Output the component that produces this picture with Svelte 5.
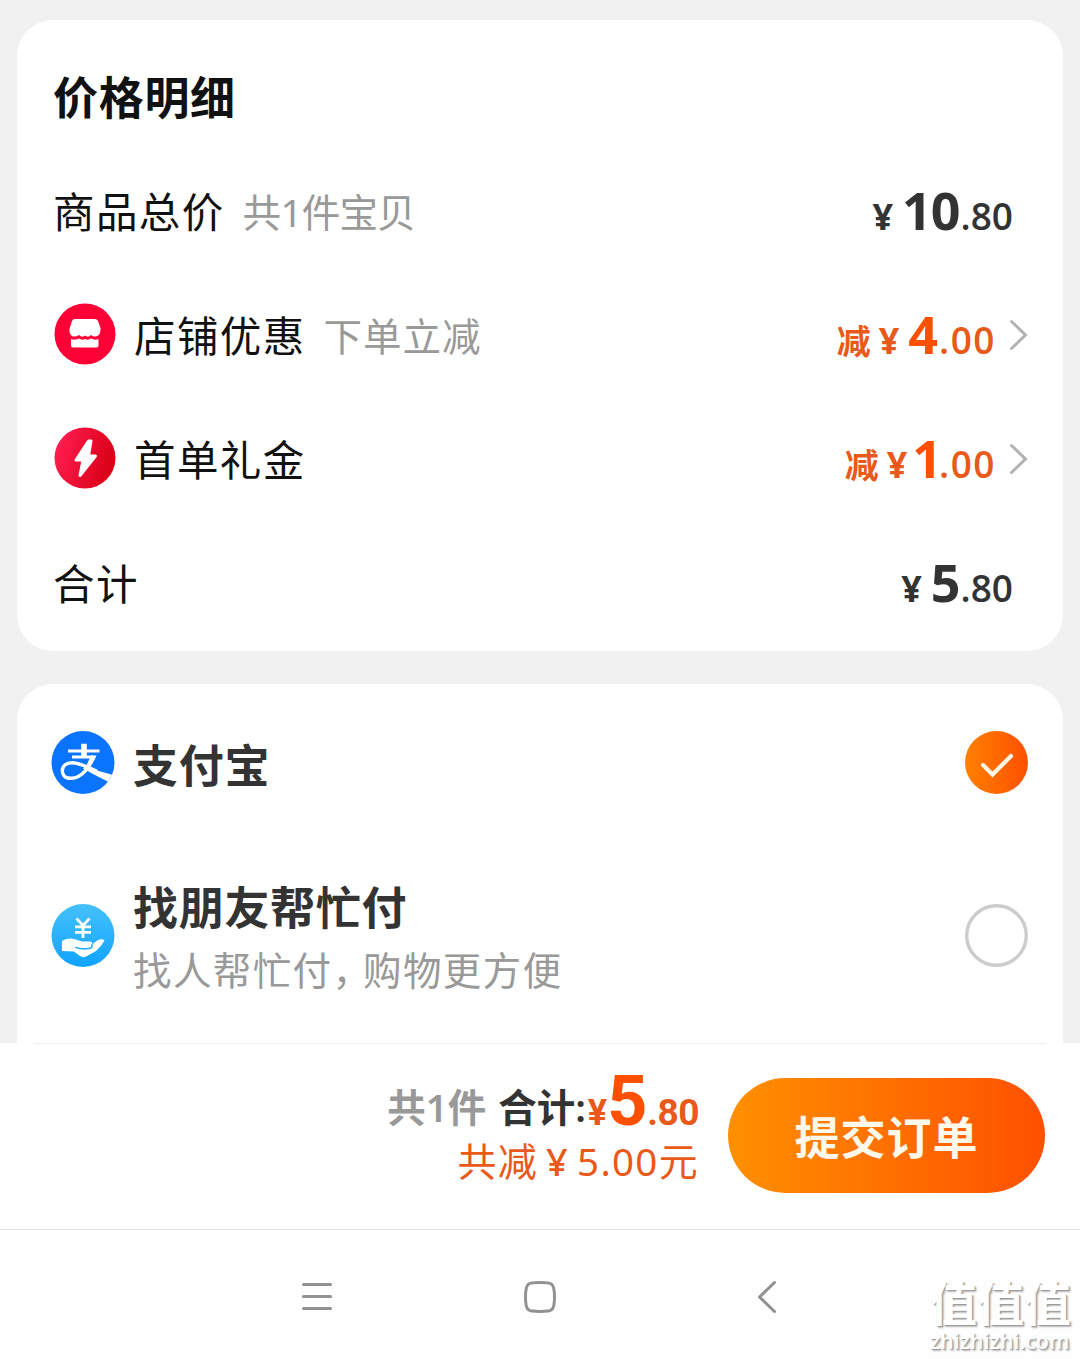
<script>
  const rows = [
    { label: '商品总价', note: '共1件宝贝', int: '10', dec: '.80' },
    { label: '店铺优惠', note: '下单立减', icon: 'shop', cut: true, int: '4', dec: '.00' },
    { label: '首单礼金', icon: 'bolt', cut: true, int: '1', dec: '.00' },
    { label: '合计', int: '5', dec: '.80' },
  ];
  let method = $state('alipay');
</script>

{#snippet radio(on)}
  <svg class="radio" viewBox="0 0 64 64">
    {#if on}
      <circle cx="31.500" cy="31.500" r="31.5" fill="url(#orange)" />
      <path d="M18 34 L27.500 43.500 L46 25" fill="none" stroke="#fff6e6" stroke-width="4.2" stroke-linecap="round" stroke-linejoin="miter" />
    {:else}
      <circle cx="31.500" cy="31.500" r="29.8" fill="#fff" stroke="#ccc" stroke-width="3.4" />
    {/if}
    <defs>
      <linearGradient id="orange"><stop offset="0" stop-color="#ff8000" /><stop offset="1" stop-color="#ff5000" /></linearGradient>
    </defs>
  </svg>
{/snippet}

<div class="screen">
  <main>
    <section class="card prices">
      <h2>价格明细</h2>
      {#each rows as row}
        <div class="row">
          {#if row.icon === 'shop'}
            <svg class="badge" viewBox="0 0 62 62">
              <circle cx="31" cy="31" r="30.5" fill="#ff0036" />
              <path d="M20.500 16 H41 Q43 16 44 18 L46.500 25 Q47 32 42 33.500 Q39 34 37 32 Q34 35 31 32.500 Q28 35 25 32 Q22 34 19 33.500 Q15 32 15.500 26 L18 18 Q19 16 20.500 16 Z" fill="#fff" />
              <path d="M17 36 Q21 37.500 25 35.500 Q28 37.500 31 36 Q34 37.500 37 35.500 Q41 37.500 44.500 36 V42.500 Q44.500 44.500 42.500 44.500 H19 Q17 44.500 17 42.500 Z" fill="#fff" />
            </svg>
          {:else if row.icon === 'bolt'}
            <svg class="badge" viewBox="0 0 62 62">
              <defs><linearGradient id="red" x1="0" y1="0" x2="1" y2=".3"><stop offset=".1" stop-color="#ff1e50" /><stop offset="1" stop-color="#dc0018" /></linearGradient></defs>
              <circle cx="31" cy="31" r="30.5" fill="url(#red)" />
              <path d="M34.500 14 L22 33 H29 L26 48.500 L41.500 29 H34.500 L37 14 Z" fill="#fff" stroke="#fff" stroke-width="3" stroke-linejoin="round" />
            </svg>
          {/if}
          <span class="label">{row.label}</span>
          {#if row.note}<span class="note" class:mixed={row.note.includes('1')}>{row.note}</span>{/if}
          <span class="amount" class:cut={row.cut}>
            {#if row.cut}<span class="word">减</span>{/if}<span class="yen">¥</span><span class="int" class:thin={row.int === '1'}>{row.int}</span><span class="dec">{row.dec}</span>
          </span>
          {#if row.cut}
            <svg class="chevron" viewBox="0 0 20 32"><path d="M2.500 2.500 L16.500 16 L2.500 29.500" fill="none" stroke="#b2b2b2" stroke-width="3" stroke-linecap="round" /></svg>
          {/if}
        </div>
      {/each}
    </section>

    <section class="card methods">
      <button class="method first" onclick={() => (method = 'alipay')}>
        <svg class="logo" viewBox="0 0 64 64">
          <defs><clipPath id="disc"><circle cx="32" cy="31.500" r="31.5" /></clipPath></defs>
          <circle cx="32" cy="31.500" r="31.500" fill="#0a74ff" />
          <g clip-path="url(#disc)" fill="none" stroke="#fff">
            <path d="M33 12.800 V26" stroke-width="5.600" />
            <path d="M17 20 H48.500" stroke-width="2.800" />
            <path d="M21 26 H42" stroke-width="2.800" />
            <path d="M42.500 25 C39 35 31.500 47.300 20 47.300 C13.500 47.300 11.300 43.500 11.300 40 C11.300 35 15 31.800 21 31.800 C29 31.800 37 36 46 40.500" stroke-width="3.400" />
            <path d="M35 34.800 L46 39.500 L64 44.500 L59.500 52 L42 43 L32 37.500 Z" fill="#fff" stroke="none" />
            <path d="M45.500 24.600 H40 L35 35.500 L38 37.500 Q43 31 45.500 24.600 Z" fill="#fff" stroke="none" />
          </g>
        </svg>
        <span class="text"><span class="name">支付宝</span></span>
        {@render radio(method === 'alipay')}
      </button>
      <button class="method second" onclick={() => (method = 'friend')}>
        <svg class="logo" viewBox="0 0 64 64">
          <defs><linearGradient id="sky" x1="0" y1="0" x2="0" y2="1"><stop offset="0" stop-color="#45c1fa" /><stop offset="1" stop-color="#10a3ff" /></linearGradient></defs>
          <circle cx="32" cy="31.500" r="31.500" fill="url(#sky)" />
          <path d="M25.500 14.500 L32 21.500 L38.500 14.500 M24 22.800 H40 M24 28.300 H40 M32 21.500 V34" fill="none" stroke="#fff" stroke-width="2.800" />
          <path d="M11 37 Q17 33.500 23 35 L31 37.500 H39 Q42 38 41 40.500 L47 36 Q52 34.500 53.500 36.500 Q50 43 45 47 L35 52.500 Q32 54 29 52 L23 47.500 L11 47 Z" fill="#fff" />
          <path d="M25 43.500 Q31 45.500 38 44.500 Q42 44 40.800 40.700" fill="none" stroke="#24aefd" stroke-width="1.600" stroke-linecap="round" />
        </svg>
        <span class="text"><span class="name">找朋友帮忙付</span><span class="sub">找人帮忙付<span class="comma">，</span>购物更方便</span></span>
        {@render radio(method === 'friend')}
      </button>
    </section>
  </main>

  <footer>
    <div class="summary">
      <div class="total"><span class="count">共1件</span><span class="sum">合计:</span><span class="yen">¥</span><span class="int">5</span><span class="dec">.80</span></div>
      <div class="saved"><span>共减</span><span class="yen">¥</span><span class="num">5.00</span><span class="unit">元</span></div>
    </div>
    <button class="submit">提交订单</button>
  </footer>

  <nav>
    <svg viewBox="0 0 36 36"><path d="M4.500 5.500 H31.500 M4.500 17.500 H31.500 M4.500 29.500 H31.500" /></svg>
    <svg viewBox="0 0 36 36"><path d="M18 3.500 C30 3.500 32.500 3.500 32.500 18 C32.500 32.500 30 32.500 18 32.500 C6 32.500 3.500 32.500 3.500 18 C3.500 3.500 6 3.500 18 3.500 Z" /></svg>
    <svg viewBox="0 0 36 36"><path d="M29.500 3.500 L14.500 18 L29.500 32.500" /></svg>
  </nav>

  <div class="mark"><b>值值值</b><i>zhizhizhi.com</i></div>
</div>

<style>
  :global(body) { background: #f1f1f1; }
  .screen {
    position: relative;
    width: 1080px;
    height: 1359px;
    display: flex;
    flex-direction: column;
    overflow: hidden;
    background: #f1f1f1;
    color: #111;
    font-family: 'Noto Sans', 'Noto Sans CJK SC', sans-serif;
    white-space: nowrap;
  }
  main {
    box-sizing: border-box;
    height: 1043px;
    padding: 20px 17px 0;
    display: flex;
    flex-direction: column;
    gap: 33px;
    overflow: hidden;
  }
  .card { flex: none; box-sizing: border-box; background: #fff; border-radius: 36px; }
  .prices { height: 631px; padding: 0 50px 0 36px; }
  h2 {
    margin: 0;
    height: 130px;
    padding-top: 46px;
    box-sizing: border-box;
    font: 700 45px/60px 'Noto Sans CJK SC', sans-serif;
    letter-spacing: .7px;
  }
  .row { height: 124px; display: flex; align-items: center; line-height: 60px; }
  .badge { flex: none; width: 62px; height: 62px; margin: -5px 18px 0 1px; }
  .label { margin-top: -5px; font-family: 'Noto Sans CJK SC', sans-serif; font-size: 41.500px; letter-spacing: 1.400px; }
  .note { margin: 0 0 0 18px; font-size: 38.500px; letter-spacing: 1px; color: #999; }
  .mixed { letter-spacing: -.7px; }
  .amount {
    margin: 2px 0 0 auto;
    display: flex;
    align-items: baseline;
    font-family: 'Open Sans', sans-serif;
    font-weight: 600;
    color: #333;
  }
  .amount .yen { font-size: 36px; font-weight: 700; }
  .amount .int { margin-left: 9px; font-size: 52px; font-weight: 700; letter-spacing: -1px; }
  .amount .dec { margin-left: 1px; font-size: 37px; }
  .amount .word { margin-right: 8px; font: 700 34px/60px 'Noto Sans CJK SC', sans-serif; }
  .cut { color: #e8591a; }
  .cut .int { color: #ff5000; letter-spacing: 0; }
  .amount .thin { margin-left: 5px; letter-spacing: -4px; }
  .cut .dec { letter-spacing: 1.500px; }
  .chevron { flex: none; width: 20px; height: 32px; margin: -3px -16px 0 13px; }
  .methods { height: 400px; padding: 0 34px; display: flex; flex-direction: column; }
  button { border: 0; background: none; color: inherit; text-align: left; }
  .method { display: flex; align-items: center; width: 100%; padding: 0; }
  .first { height: 157px; }
  .second { height: 189px; }
  .logo, .radio { flex: none; width: 64px; height: 64px; }
  .text { flex: 1; margin-left: 18px; display: flex; flex-direction: column; font-family: 'Noto Sans CJK SC', sans-serif; }
  .name { font-size: 45px; line-height: 62px; font-weight: 700; letter-spacing: .7px; color: #333; }
  .first .text { margin-top: 2px; }
  .second .text { margin-top: 3px; }
  .sub { font-size: 38.500px; line-height: 62px; letter-spacing: 1.400px; color: #999; }
  .comma { letter-spacing: -8px; }
  footer {
    box-sizing: border-box;
    height: 187px;
    padding: 0 35px 0 0;
    display: flex;
    justify-content: flex-end;
    background: linear-gradient(#f0f0f0, #f0f0f0) 34px 0 / 1012px 1px no-repeat #fff;
    border-bottom: 1px solid #e2e2e2;
  }
  .summary { display: flex; flex-direction: column; align-items: flex-end; padding-top: 23px; margin-right: 29px; color: #e8591a; }
  .total { display: flex; align-items: baseline; height: 70px; line-height: 70px; font-weight: 600; font-size: 38.500px; }
  .count, .sum { position: relative; top: -3px; }
  .count { color: #999; }
  .sum { margin-left: 12px; margin-right: 2px; color: #333; }
  .total .yen, .total .int, .total .dec { font-family: Roboto, sans-serif; font-weight: 700; }
  .total .yen { font-size: 36px; }
  .total .int { font-size: 70px; color: #ff5000; }
  .total .dec { font-size: 37px; letter-spacing: -.5px; }
  .saved { display: flex; align-items: baseline; height: 50px; line-height: 50px; font-size: 39px; letter-spacing: 1.300px; }
  .saved .yen { margin: 0 8px; font-size: 38px; font-weight: 500; }
  .saved .num { font-size: 38.500px; }
  .submit {
    width: 317px;
    height: 115px;
    margin-top: 35px;
    padding: 0;
    border-radius: 58px;
    background: linear-gradient(90deg, #ff9000, #ff5000);
    color: #fff9ec;
    text-align: center;
    font: 700 45px/115px 'Noto Sans CJK SC', sans-serif;
    letter-spacing: 1px;
  }
  nav {
    flex: 1;
    display: flex;
    justify-content: center;
    gap: 187px;
    padding-top: 49px;
    background: #fefefe;
  }
  nav svg { width: 36px; height: 36px; fill: none; stroke: #919191; stroke-width: 3; stroke-linecap: round; stroke-linejoin: round; }
  .mark {
    position: absolute;
    left: 930px;
    top: 1272px;
    width: 142px;
    color: #fff;
    text-shadow: 1px 1px 1px #999, 2px 2px 2px #bbb;
  }
  .mark b { display: block; height: 56px; font: 700 47px/58px 'Noto Sans CJK SC', sans-serif; }
  .mark i { display: block; font: normal 600 21px/26px 'Open Sans', sans-serif; letter-spacing: .2px; }
</style>
